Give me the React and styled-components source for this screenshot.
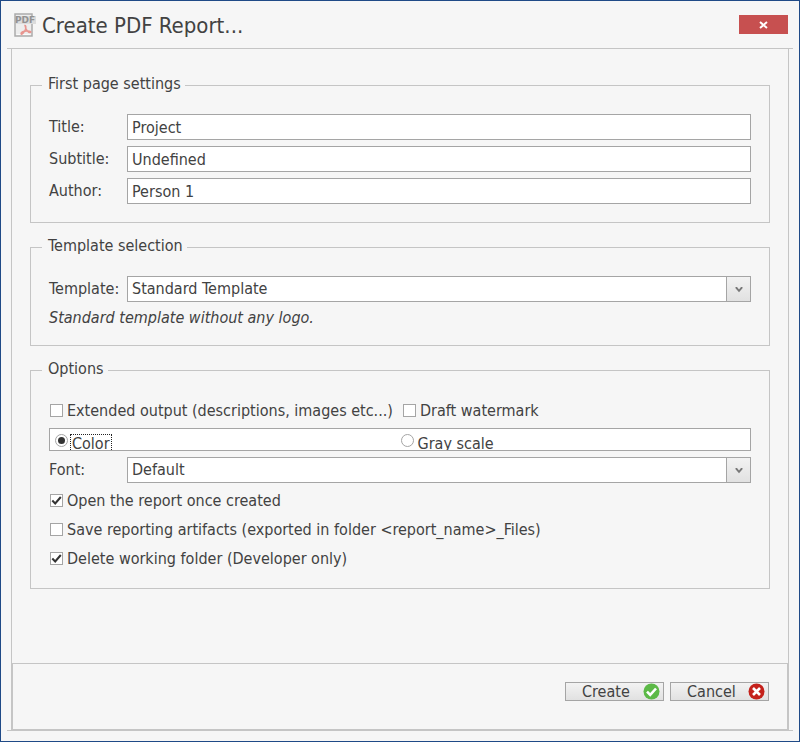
import React, { useState } from 'react';
import styled, { createGlobalStyle } from 'styled-components';

const line = '#c5c5c5';
const edge = '#a5a5a5';
const ink = '#424242';
const surface = '#f6f6f6';
const fontStack = '"DejaVu Sans Condensed", "Noto Sans", sans-serif';

const GlobalStyle = createGlobalStyle`
  *, *::before, *::after { box-sizing: border-box; }
  body { margin: 0; background: ${surface}; color: ${ink}; font: 16px/20px ${fontStack}; }
  button, input, select { font: inherit; color: inherit; margin: 0; }
`;

const Window = styled.main`
  display: flex;
  flex-direction: column;
  min-height: 100vh;
  padding: 0 6px 10px;
  border: 1px solid #1f4a87;
  background: ${surface};
`;

const TitleBar = styled.header`
  display: flex;
  align-items: center;
  gap: 5px;
  height: 48px;
  padding: 0 5px 0 6px;
  border-bottom: 1px solid ${line};
`;

const Heading = styled.h1`
  flex: 1;
  margin: 0;
  padding-top: 2px;
  font-size: 22px;
  font-weight: 400;
  line-height: 28px;
`;

const CloseButton = styled.button`
  display: grid;
  place-items: center;
  width: 49px;
  height: 19px;
  padding: 0;
  border: 0;
  background: #c75050;
`;

const Frame = styled.form`
  flex: 1;
  display: flex;
  flex-direction: column;
  border-bottom: 1px solid ${line};
  padding: 0 4px;
`;

const Content = styled.div`
  flex: 1;
  display: flex;
  flex-direction: column;
  gap: 14px;
  padding: 26px 18px 18px;
  border: solid ${line};
  border-width: 0 1px;
`;

const Group = styled.fieldset`
  min-width: 0;
  margin: 0;
  padding: 18px;
  border: 1px solid ${line};
`;

const Legend = styled.legend`
  margin-left: -7px;
  padding: 0 4px 4px 6px;
  line-height: 17px;
`;

const Stack = styled.div`
  display: grid;
  gap: 6px;
`;

const Field = styled.div`
  display: grid;
  grid-template-columns: 78px 1fr;
  align-items: center;
`;

const TextInput = styled.input`
  width: 100%;
  min-width: 0;
  height: 26px;
  padding: 0 4px;
  border: 1px solid ${edge};
  border-radius: 0;
  background: #fff;
`;

const SelectBox = styled.div`
  display: grid;
  grid-template-columns: 1fr 25px;
`;

const Select = styled.select`
  grid-area: 1 / 1 / 2 / 3;
  appearance: none;
  min-width: 0;
  height: 26px;
  padding: 0 29px 0 4px;
  border: 1px solid ${edge};
  border-radius: 0;
  background: #fff;
`;

const DropArrow = styled.span`
  grid-area: 1 / 2;
  display: grid;
  place-items: center;
  border: 1px solid ${edge};
  background: linear-gradient(#f2f2f2, #e1e1e1);
  pointer-events: none;
`;

const Description = styled.p`
  margin: 0;
  font-style: italic;
  line-height: 19px;
`;

const CheckPair = styled.div`
  display: grid;
  grid-template-columns: 1fr 1fr;
  column-gap: 4px;
`;

const CheckLabel = styled.label`
  display: flex;
  align-items: center;
  gap: 4px;
  padding-left: 1px;
  line-height: 23px;
  white-space: nowrap;
`;

const Mark = styled.span`
  display: grid;
  flex: none;
  width: 13px;
  height: 13px;

  & > * { grid-area: 1 / 1; }
  svg { pointer-events: none; }
`;

const Toggle = styled.input`
  appearance: none;
  width: 13px;
  height: 13px;
  border: 1px solid ${edge};
  border-radius: ${(p) => (p.type === 'radio' ? '50%' : '0')};
  background: #fff;
`;

const RadioBox = styled.div`
  display: grid;
  grid-template-columns: 1fr 1fr;
  height: 23px;
  padding: 0 4px 0 5px;
  border: 1px solid ${edge};
  background: #fff;
  overflow: hidden;
`;

const RadioLabel = styled.label`
  display: flex;
  align-items: flex-start;
  gap: 2px;
  padding-top: 5px;
`;

const RadioText = styled.span`
  padding: 0 1px;
  border: 1px dotted ${(p) => (p.$focused ? '#222' : 'transparent')};
  line-height: 18px;
`;

const Footer = styled.footer`
  display: flex;
  justify-content: flex-end;
  gap: 6px;
  padding: 18px 18px 28px;
  border: 1px solid ${line};
  box-shadow: -1px 0 ${line}, 1px 0 ${line};
  margin: 0 1px;
`;

const ActionButton = styled.button`
  display: flex;
  align-items: center;
  justify-content: space-between;
  width: 99px;
  height: 19px;
  padding: 0 3px 0 16px;
  border: 1px solid ${edge};
  background: linear-gradient(#f3f3f3, #e1e1e1);
  line-height: 17px;
`;

function PdfIcon() {
  return (
    <svg width="24" height="26" viewBox="0 0 24 26" aria-hidden="true">
      <path d="M2 2h17v22H2z" fill="#ededed" stroke="#acacac" strokeWidth="1.500" />
      <path d="M3.500 22.500h14" stroke="#fafafa" strokeWidth="1" />
      <path d="M3 4h20v8H3z" fill="#dcdcdc" />
      <text x="2" y="11" fontFamily="DejaVu Sans" fontWeight="700" fontSize="9" fill="#929292">PDF</text>
      <path d="M12 13.500c1.500 0 1 4-1 6.500-1.500 2-3 3-3 1.500s3-2.300 6-2.500c3-.2 4.500.8 3.500 1.500-1.500.8-5-2.300-5.500-7z" fill="none" stroke="#e8958f" strokeWidth="1.400" />
    </svg>
  );
}

function ChevronIcon() {
  return (
    <svg width="8" height="7" viewBox="0 0 8 7" aria-hidden="true">
      <path d="M.5 1v1.300L4 6.300l3.500-4V1H6L4 3.500 2 1z" fill="#777" />
    </svg>
  );
}

function CheckIcon() {
  return (
    <svg width="13" height="13" viewBox="0 0 13 13" aria-hidden="true">
      <path d="M2.300 6.500l2.900 3 5.600-6.500" fill="none" stroke="#333" strokeWidth="2" />
    </svg>
  );
}

function DotIcon() {
  return (
    <svg width="13" height="13" viewBox="0 0 13 13" aria-hidden="true">
      <circle cx="6.500" cy="6.500" r="3.500" fill="#333" />
    </svg>
  );
}

function ConfirmIcon() {
  return (
    <svg width="17" height="17" viewBox="0 0 17 17" aria-hidden="true">
      <circle cx="8.500" cy="8.500" r="8" fill="#5cb947" />
      <path d="M4 8.700l3.200 3.200 5.800-6.400" fill="none" stroke="#fff" strokeWidth="2.600" />
    </svg>
  );
}

function CancelIcon() {
  return (
    <svg width="17" height="17" viewBox="0 0 17 17" aria-hidden="true">
      <circle cx="8.500" cy="8.500" r="8" fill="#c4211b" />
      <path d="M5 5l7 7M12 5l-7 7" fill="none" stroke="#fff" strokeWidth="2.600" />
    </svg>
  );
}

function TextField({ id, label, value }) {
  return (
    <Field>
      <label htmlFor={id}>{label}</label>
      <TextInput id={id} type="text" defaultValue={value} />
    </Field>
  );
}

function SelectField({ id, label, value }) {
  return (
    <Field>
      <label htmlFor={id}>{label}</label>
      <SelectBox>
        <Select id={id} defaultValue={value}>
          <option>{value}</option>
        </Select>
        <DropArrow><ChevronIcon /></DropArrow>
      </SelectBox>
    </Field>
  );
}

function CheckOption({ label, initial = false }) {
  const [on, setOn] = useState(initial);
  return (
    <CheckLabel>
      <Mark>
        <Toggle type="checkbox" checked={on} onChange={(e) => setOn(e.target.checked)} />
        {on && <CheckIcon />}
      </Mark>
      {label}
    </CheckLabel>
  );
}

function ColorModes() {
  const [mode, setMode] = useState('Color');
  return (
    <RadioBox role="radiogroup" aria-label="Color mode">
      {['Color', 'Gray scale'].map((name) => (
        <RadioLabel key={name}>
          <Mark>
            <Toggle type="radio" name="mode" checked={mode === name} onChange={() => setMode(name)} />
            {mode === name && <DotIcon />}
          </Mark>
          <RadioText $focused={mode === name}>{name}</RadioText>
        </RadioLabel>
      ))}
    </RadioBox>
  );
}

export default function App() {
  return (
    <Window>
      <GlobalStyle />
      <TitleBar>
        <PdfIcon />
        <Heading>Create PDF Report...</Heading>
        <CloseButton type="button" aria-label="Close">
          <svg width="9" height="8" viewBox="0 0 9 8" aria-hidden="true">
            <path d="M1 1l7 6M8 1L1 7" stroke="#fff" strokeWidth="2" />
          </svg>
        </CloseButton>
      </TitleBar>
      <Frame onSubmit={(e) => e.preventDefault()}>
        <Content>
          <Group>
            <Legend>First page settings</Legend>
            <Stack>
              <TextField id="title" label="Title:" value="Project" />
              <TextField id="subtitle" label="Subtitle:" value="Undefined" />
              <TextField id="author" label="Author:" value="Person 1" />
            </Stack>
          </Group>
          <Group>
            <Legend>Template selection</Legend>
            <Stack>
              <SelectField id="template" label="Template:" value="Standard Template" />
              <Description>Standard template without any logo.</Description>
            </Stack>
          </Group>
          <Group>
            <Legend>Options</Legend>
            <Stack>
              <CheckPair>
                <CheckOption label="Extended output (descriptions, images etc...)" />
                <CheckOption label="Draft watermark" />
              </CheckPair>
              <ColorModes />
              <SelectField id="font" label="Font:" value="Default" />
              <CheckOption label="Open the report once created" initial />
              <CheckOption label="Save reporting artifacts (exported in folder <report_name>_Files)" />
              <CheckOption label="Delete working folder (Developer only)" initial />
            </Stack>
          </Group>
        </Content>
        <Footer>
          <ActionButton type="submit">Create<ConfirmIcon /></ActionButton>
          <ActionButton type="button">Cancel<CancelIcon /></ActionButton>
        </Footer>
      </Frame>
    </Window>
  );
}
